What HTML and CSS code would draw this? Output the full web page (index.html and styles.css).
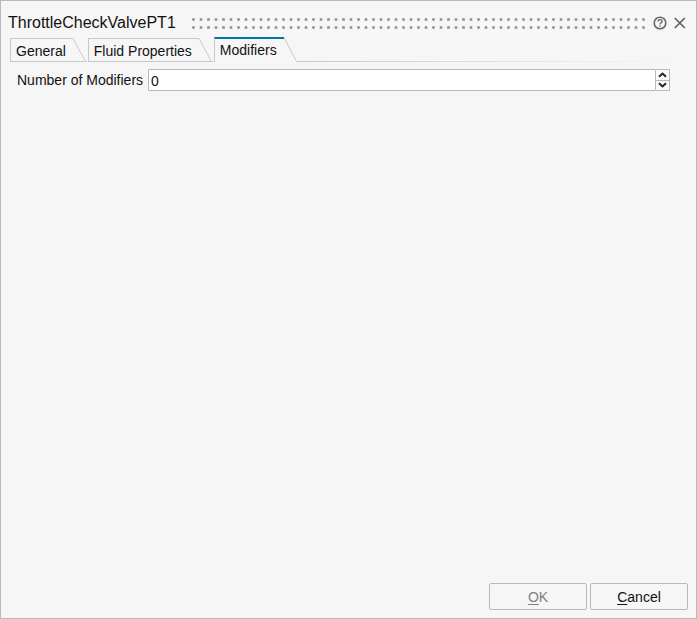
FILE: index.html
```html
<!DOCTYPE html>
<html lang="en">
  <head>
    <meta charset="UTF-8" />
    <meta name="viewport" content="width=device-width, initial-scale=1.0" />
    <title>ThrottleCheckValvePT1</title>
    <link rel="stylesheet" href="styles.css">
  </head>
  <body>
    <form class="dialog">
      <header class="title-bar">
        <h1 class="title">ThrottleCheckValvePT1</h1>
        <svg class="grip" aria-hidden="true">
          <defs>
            <pattern id="dots" width="15" height="8" patternUnits="userSpaceOnUse">
              <rect x="0" y="0" width="3" height="3" fill="#c4c4c4" />
              <rect x="0.5" y="0.5" width="2" height="2" fill="#8c8c8c" />
              <rect x="7.5" y="0" width="3" height="3" fill="#c4c4c4" />
              <rect x="8" y="0.5" width="2" height="2" fill="#8c8c8c" />
            </pattern>
          </defs>
          <rect width="100%" height="11" fill="url(#dots)" />
        </svg>
        <button type="button" class="icon-btn" aria-label="Help">
          <svg width="14" height="14" viewBox="0 0 14 14" fill="none" stroke="#686868">
            <circle cx="7" cy="7" r="5.8" stroke-width="1.6" />
            <path d="M5 5.6C5 3 9.1 3.1 9.1 5.4C9.1 6.7 7.1 6.8 7.1 8.4" stroke-width="1.4" />
            <path d="M7.1 9.4v1.4" stroke-width="1.4" />
          </svg>
        </button>
        <button type="button" class="icon-btn" aria-label="Close">
          <svg width="14" height="14" viewBox="0 0 14 14" fill="none" stroke="#606060" stroke-width="1.7">
            <path d="M1.8 2L11.8 12M11.8 2L1.8 12" />
          </svg>
        </button>
      </header>

      <div class="tabs" role="tablist">
        <button type="button" class="tab" role="tab" aria-selected="false">
          <span class="tab-label">General</span>
          <svg class="slant" width="14" height="24" viewBox="0 0 14 24"><path d="M0 0.5L12.5 23.5M0 23.5H14" /></svg>
        </button>
        <button type="button" class="tab" role="tab" aria-selected="false">
          <span class="tab-label">Fluid Properties</span>
          <svg class="slant" width="14" height="24" viewBox="0 0 14 24"><path d="M0 0.5L12.5 23.5M0 23.5H14" /></svg>
        </button>
        <button type="button" class="tab active" role="tab" aria-selected="true">
          <span class="tab-label">Modifiers</span>
          <svg class="slant" width="14" height="25" viewBox="0 0 14 25"><path d="M0 0.5L12.5 24.5H14" /></svg>
        </button>
        <div class="tab-line"></div>
      </div>

      <main class="panel" role="tabpanel">
        <label for="modifiers">Number of Modifiers</label>
        <div class="spinbox">
          <input type="number" id="modifiers" value="0" min="0" />
          <div class="arrows">
            <button type="button" aria-label="Increase" data-step="1">
              <svg width="9" height="6" viewBox="0 0 9 6"><path d="M1 4.7L4.5 1.5L8 4.7" /></svg>
            </button>
            <button type="button" aria-label="Decrease" data-step="-1">
              <svg width="9" height="6" viewBox="0 0 9 6"><path d="M1 1.3L4.5 4.5L8 1.3" /></svg>
            </button>
          </div>
        </div>
      </main>

      <footer class="actions">
        <button type="button" class="btn" disabled><u>O</u>K</button>
        <button type="button" class="btn"><u>C</u>ancel</button>
      </footer>
    </form>

    <script>
      const input = document.querySelector("#modifiers");

      document.querySelectorAll(".arrows button").forEach((button) => {
        button.addEventListener("click", () => {
          if (button.dataset.step === "1") input.stepUp();
          else input.stepDown();
        });
      });
    </script>
  </body>
</html>
```
FILE: styles.css
```css
* {
  margin: 0;
  padding: 0;
  box-sizing: border-box;
}

:root {
  --bg: #f6f6f6;
  --border: #b9b9b9;
  --tab-border: #c8c8c8;
  --accent: #0078a8;
  --text: #111111;
}

body,
button,
input {
  font-family: "Liberation Sans", Arial, sans-serif;
  font-size: 14px;
  color: var(--text);
}

svg {
  display: block;
}

.dialog {
  display: flex;
  flex-direction: column;
  min-height: 100vh;
  background: var(--bg);
  border: 1px solid var(--border);
}

/* Title bar */
.title-bar {
  display: flex;
  align-items: center;
  height: 36px;
  padding: 8px 9px 0 7px;
}

.title {
  font-size: 16px;
  font-weight: normal;
  line-height: 20px;
}

.grip {
  flex: 1;
  height: 10px;
  margin: 0 8px 0 16px;
  overflow: visible;
}

.icon-btn {
  border: none;
  background: none;
  cursor: pointer;
}

.icon-btn + .icon-btn {
  margin-left: 6px;
}

/* Tabs */
.tabs {
  display: flex;
  align-items: flex-end;
  height: 25px;
  padding: 0 19px 0 9px;
}

.tab {
  display: flex;
  height: 24px;
  border: none;
  background: none;
}

.tab + .tab {
  margin-left: 1px;
}

.tab-label {
  height: 24px;
  padding: 0 7px 0 5px;
  line-height: 24px;
  border: 1px solid var(--tab-border);
  border-right: none;
}

.tab.active {
  height: 25px;
}

.tab.active .tab-label {
  height: 25px;
  line-height: 22px;
  border-top: 2px solid var(--accent);
  border-bottom: none;
}

.slant {
  fill: none;
  stroke: var(--tab-border);
}

.tab-line {
  flex: 1;
  height: 1px;
  background: linear-gradient(to right, var(--tab-border), var(--bg));
}

/* Panel */
.panel {
  flex: 1;
  display: flex;
  align-items: flex-start;
  gap: 5px;
  padding: 7px 26px 0 16px;
}

.panel label {
  line-height: 22px;
}

.spinbox {
  flex: 1;
  display: flex;
  height: 22px;
}

.spinbox input {
  flex: 1;
  min-width: 0;
  padding: 1px 2px 0;
  background: #ffffff;
  border: 1px solid var(--border);
  border-radius: 1px;
  outline: none;
  appearance: textfield;
}

.spinbox input::-webkit-inner-spin-button {
  appearance: none;
}

.arrows {
  display: flex;
  flex-direction: column;
  width: 14px;
  border: 1px solid var(--border);
  border-left: none;
  border-radius: 1px;
}

.arrows button {
  flex: 1;
  display: flex;
  align-items: center;
  justify-content: center;
  border: none;
  background: #fafafa;
}

.arrows button + button {
  border-top: 1px solid var(--border);
}

.arrows path {
  fill: none;
  stroke: #222222;
  stroke-width: 2;
}

/* Footer buttons */
.actions {
  display: flex;
  justify-content: flex-end;
  gap: 3px;
  padding: 8px;
}

.btn {
  width: 98px;
  height: 27px;
  background: var(--bg);
  border: 1px solid var(--border);
  border-radius: 2px;
}

.btn:disabled {
  color: #808080;
}

.btn u {
  text-underline-offset: 2px;
}
```
